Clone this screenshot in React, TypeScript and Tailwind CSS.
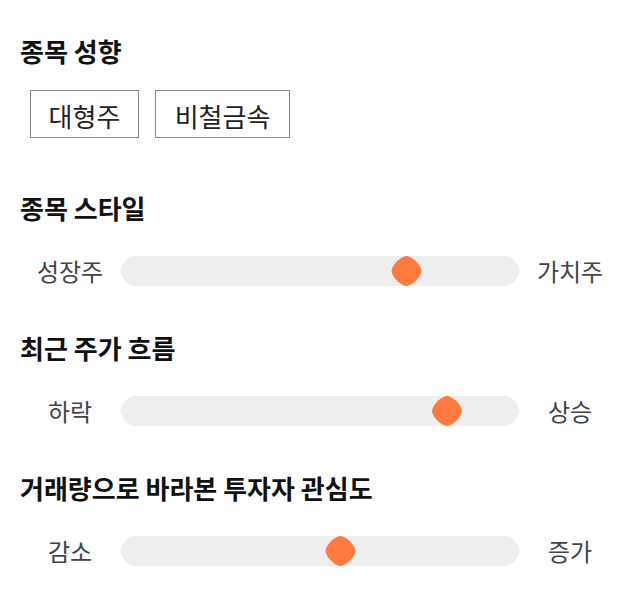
import React from "react";

const font = { fontFamily: '"Noto Sans CJK KR", "Noto Sans", sans-serif' };

function thumbPath(cx: number, cy: number, r: number, n: number) {
  const pts: string[] = [];
  const steps = 72;
  for (let i = 0; i < steps; i++) {
    const t = (i / steps) * Math.PI * 2;
    const c = Math.cos(t);
    const s = Math.sin(t);
    const x = cx + r * Math.sign(c) * Math.pow(Math.abs(c), 2 / n);
    const y = cy + r * Math.sign(s) * Math.pow(Math.abs(s), 2 / n);
    pts.push(`${x.toFixed(2)},${y.toFixed(2)}`);
  }
  return `M${pts.join(" L")} Z`;
}

function Track({ center }: { center: number }) {
  const cx = center - 120;
  return (
    <div className="relative h-[30px] w-[400px]">
      <svg width="400" height="30" viewBox="0 0 400 30" className="block">
        <path
          d="M0,15 C3,6 8,0 15,0 L385,0 C392,0 397,6 400,15 C397,24 392,30 385,30 L15,30 C8,30 3,24 0,15 Z"
          fill="#eeeeee"
        />
        <path d={thumbPath(cx, 15, 15, 1.55)} fill="#ff7a3e" />
      </svg>
    </div>
  );
}

function SliderRow({ left, right, center }: { left: string; right: string; center: number }) {
  return (
    <div className="flex items-center h-[30px]">
      <div className="w-[100px] text-center text-[24px] leading-[30px] text-[#444]">{left}</div>
      <Track center={center} />
      <div className="w-[100px] text-center text-[24px] leading-[30px] text-[#444]">{right}</div>
    </div>
  );
}

function Heading({ children, className = "" }: { children: React.ReactNode; className?: string }) {
  return (
    <h2 className={`px-5 text-[26px] leading-[32px] font-bold text-[#111] ${className}`}>{children}</h2>
  );
}

export default function App() {
  return (
    <div className="w-[640px] h-[606px] bg-white overflow-hidden" style={font}>
      <div className="pt-[35px]">
        <Heading>종목 성향</Heading>
        <div className="mt-[23px] flex gap-4 pl-[30px]">
          <div className="h-[48px] w-[109px] border border-[#888] flex items-center justify-center pt-[3px] text-[26px] text-[#222]">
            대형주
          </div>
          <div className="h-[48px] w-[135px] border border-[#888] flex items-center justify-center pt-[3px] text-[26px] text-[#222]">
            비철금속
          </div>
        </div>
        <Heading className="mt-[54px]">종목 스타일</Heading>
        <div className="px-5 mt-[32px]">
          <SliderRow left="성장주" right="가치주" center={406.5} />
        </div>
        <Heading className="mt-[46px]">최근 주가 흐름</Heading>
        <div className="px-5 mt-[32px]">
          <SliderRow left="하락" right="상승" center={447} />
        </div>
        <Heading className="mt-[46px]">거래량으로 바라본 투자자 관심도</Heading>
        <div className="px-5 mt-[32px]">
          <SliderRow left="감소" right="증가" center={340.5} />
        </div>
      </div>
    </div>
  );
}
